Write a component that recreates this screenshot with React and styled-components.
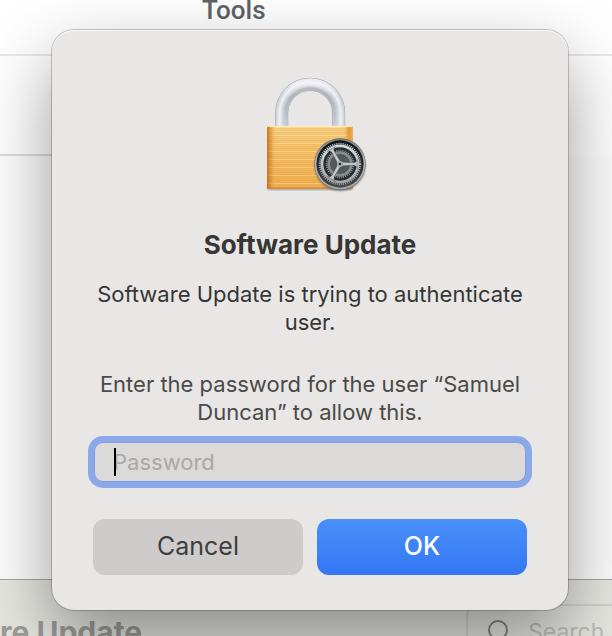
import React, { useState } from 'react'
import styled, { createGlobalStyle } from 'styled-components'

const GlobalStyle = createGlobalStyle`
    * {
        box-sizing: border-box;
    }

    body {
        margin: 0;
        background: #fff;
        font-family: Inter, "Liberation Sans", sans-serif;
    }
`

const Screen = styled.div`
    position: relative;
    display: flex;
    flex-direction: column;
    height: 100vh;
    overflow: hidden;
`

const PageHeader = styled.header`
    flex: none;
    height: 56px;
    padding-left: 202px;
    border-bottom: 2px solid #e8e8ea;
    color: #5f6368;
    font-family: Roboto, sans-serif;
    font-size: 26px;
    font-weight: 500;
    line-height: 20px;
`

const PageRow = styled.div`
    flex: none;
    width: 50%;
    height: 100px;
    border-bottom: 2px solid #dcdce3;
`

const PageBody = styled.main`
    flex: 1;
    background: #fdfdfd;
`

const BackWindow = styled.footer`
    flex: none;
    display: flex;
    justify-content: space-between;
    height: 57px;
    border-top: 1px solid #a4a4a4;
    background: #e6e7e1;
`

const BackTitle = styled.h2`
    margin: 0;
    padding-top: 34px;
    color: #9c9d9a;
    font-size: 30px;
    font-weight: 700;
    line-height: 36px;
`

const SearchBox = styled.label`
    display: flex;
    align-items: center;
    gap: 14px;
    width: 180px;
    height: 56px;
    margin: 24px -34px 0 0;
    padding-left: 18px;
    border: 2px solid #d3d4ce;
    border-radius: 12px;

    svg {
        flex: none;
    }

    input {
        width: 100px;
        padding: 0;
        border: 0;
        background: none;
        font-family: inherit;
        font-size: 23px;
    }

    input::placeholder {
        color: #bdbeb9;
        opacity: 1;
    }
`

const Overlay = styled.div`
    position: absolute;
    inset: 0;
    display: flex;
    justify-content: center;
    align-items: flex-start;
    padding: 30px 44px 26px 52px;
`

const Dialog = styled.form`
    display: flex;
    flex-direction: column;
    align-items: center;
    width: 100%;
    max-width: 516px;
    padding: 46px 41px 35px;
    border-radius: 22px;
    background: #e8e7e5;
    color: #363634;
    text-align: center;
    box-shadow:
        inset 0 1px 0 #f7f7f6,
        0 0 0 1px rgba(0, 0, 0, 0.2),
        0 30px 72px rgba(0, 0, 0, 0.4);
`

const Title = styled.h1`
    margin: 34px 0 20px;
    font-size: 26px;
    font-weight: 700;
    line-height: 30px;
`

const Message = styled.p`
    margin: 0 0 ${props => props.$gap}px;
    color: ${props => props.$color};
    font-size: 22px;
    line-height: 28px;
`

const Field = styled.label`
    position: relative;
    display: block;
    width: 100%;
    padding: 0 1px;
`

const PasswordInput = styled.input`
    display: block;
    width: 100%;
    height: 40px;
    padding: 0 18px;
    border: 1px solid #7f9de0;
    border-radius: 9px;
    outline: none;
    background: #dbdad8;
    box-shadow: 0 0 0 6px #8da8e9;
    caret-color: transparent;
    color: #363634;
    font-family: inherit;
    font-size: 22px;

    &::placeholder {
        color: #a9a9a7;
        opacity: 1;
    }
`

const Caret = styled.span`
    position: absolute;
    top: 6px;
    left: 21px;
    width: 2px;
    height: 28px;
    background: #000;
`

const Buttons = styled.div`
    display: grid;
    grid-template-columns: 1fr 1fr;
    gap: 14px;
    width: 100%;
    margin-top: 37px;
`

const Button = styled.button`
    height: 56px;
    padding: 0 0 2px;
    border: 0;
    border-radius: 12px;
    background: ${props => props.$primary ? 'linear-gradient(#4a90f8, #3377f6)' : '#cdccca'};
    color: ${props => props.$primary ? '#fff' : '#3e3e3c'};
    font-family: inherit;
    font-size: 25px;
    font-weight: ${props => props.$primary ? 500 : 400};
`

const LockIcon = () => (
    <svg width='120' height='120' viewBox='-18 24 360 360' aria-hidden='true'>
        <defs>
            <linearGradient id='steel' x1='0' y1='0' x2='0' y2='1'>
                <stop offset='0' stopColor='#e8eaed' />
                <stop offset='.3' stopColor='#c9cdd3' />
                <stop offset='1' stopColor='#d2d7de' />
            </linearGradient>
            <linearGradient id='inner' gradientUnits='userSpaceOnUse' x1='0' y1='60' x2='0' y2='174'>
                <stop offset='0' stopColor='#7f848d' />
                <stop offset='1' stopColor='#b4b9c1' />
            </linearGradient>
            <linearGradient id='brass' x1='0' y1='0' x2='0' y2='1'>
                <stop offset='0' stopColor='#f8d28a' />
                <stop offset='.35' stopColor='#f5c26a' />
                <stop offset='1' stopColor='#eead4e' />
            </linearGradient>
            <linearGradient id='sides'>
                <stop offset='0' stopColor='#b96813' stopOpacity='.85' />
                <stop offset='.04' stopColor='#d07f22' stopOpacity='.6' />
                <stop offset='.11' stopColor='#f5c26a' stopOpacity='0' />
                <stop offset='.88' stopColor='#f5c26a' stopOpacity='0' />
                <stop offset='.95' stopColor='#db8625' stopOpacity='.75' />
                <stop offset='1' stopColor='#f2b75d' />
            </linearGradient>
            <pattern id='brushed' width='258' height='24' patternUnits='userSpaceOnUse'>
                <path d='M0 2h258M0 14h258' stroke='#d98d2d' strokeWidth='2' opacity='.4' />
                <path d='M0 8h258M0 19h258' stroke='#dd912e' strokeWidth='2' opacity='.22' />
                <path d='M0 11h258' stroke='#ffe6ac' strokeWidth='3' opacity='.45' />
            </pattern>
            <linearGradient id='rim' x1='0' y1='0' x2='0' y2='1'>
                <stop offset='0' stopColor='#7b8085' />
                <stop offset='.5' stopColor='#b5babd' />
                <stop offset='1' stopColor='#a3a6a8' />
            </linearGradient>
            <linearGradient id='well' x1='0' y1='0' x2='0' y2='1'>
                <stop offset='0' stopColor='#0f1314' />
                <stop offset='1' stopColor='#484848' />
            </linearGradient>
            <linearGradient id='wheel' gradientUnits='userSpaceOnUse' x1='0' y1='-60' x2='0' y2='60'>
                <stop offset='0' stopColor='#d4dde0' />
                <stop offset='1' stopColor='#a0a4a6' />
            </linearGradient>
            <filter id='soft' x='-20%' y='-20%' width='140%' height='140%'>
                <feGaussianBlur stdDeviation='3' />
            </filter>
        </defs>

        <path d='M77 175V134A85 85 0 0 1 248 134V175' fill='none' stroke='#a0a4ab' strokeWidth='39' />
        <path d='M77 175V134A85 85 0 0 1 248 134V175' fill='none' stroke='url(#steel)' strokeWidth='36' />
        <path d='M90 174V134A72 72 0 0 1 235 134V174' fill='none' stroke='url(#inner)' strokeWidth='8' opacity='.6' filter='url(#soft)' />
        <path d='M71 174V134A91 91 0 0 1 254 134V174' fill='none' stroke='#f3f5f8' strokeWidth='9' filter='url(#soft)' />

        <rect x='35' y='353' width='254' height='13' fill='#555' opacity='.5' filter='url(#soft)' />
        <rect x='33' y='174' width='258' height='188' rx='2' fill='url(#brass)' />
        <rect x='33' y='174' width='258' height='188' rx='2' fill='url(#brushed)' />
        <rect x='33' y='174' width='258' height='188' rx='2' fill='url(#sides)' />
        <path d='M34 175H290' stroke='#fff0c9' strokeWidth='3' />
        <path d='M34 360H290' stroke='#c5802d' strokeWidth='3' />

        <g transform='translate(252 288)'>
            <circle cy='4' r='76' fill='#333' opacity='.6' filter='url(#soft)' />
            <circle r='77' fill='#5a5f62' />
            <circle r='76' fill='url(#rim)' />
            <circle r='71' fill='url(#well)' />
            <circle r='60' fill='none' stroke='url(#wheel)' strokeWidth='7' strokeDasharray='3 3.28' />
            <circle r='43' fill='none' stroke='#272b2c' strokeWidth='20' />
            <circle r='40' fill='none' stroke='#8d9293' strokeWidth='6' strokeDasharray='3 3.28' />
            <circle r='34' fill='#4d5152' stroke='#878b8c' strokeWidth='8' />
            <circle r='28' fill='#555858' />
            <circle r='54' fill='none' stroke='url(#wheel)' strokeWidth='8' />
            {[0, 120, 240].map(angle => (
                <path
                    key={angle}
                    transform={`rotate(${angle})`}
                    d='M4 -5L42 -4Q50 -5 52 -14V14Q50 5 42 4L4 5Z'
                    fill='#c3cbce'
                    stroke='#303435'
                    strokeWidth='1'
                />
            ))}
            <circle r='9' fill='#a8b0b3' />
            <circle r='4' fill='#25292b' />
        </g>
    </svg>
)

const App = () => {
    const [password, setPassword] = useState('')

    return (
        <>
            <GlobalStyle />
            <Screen>
                <PageHeader>Tools</PageHeader>
                <PageRow />
                <PageBody />
                <BackWindow>
                    <BackTitle>re Update</BackTitle>
                    <SearchBox>
                        <svg width='28' height='28' viewBox='0 0 28 28' fill='none' stroke='#858582' strokeWidth='2' aria-hidden='true'>
                            <circle cx='12' cy='12' r='9' />
                            <path d='M19 19l7 7' />
                        </svg>
                        <input type='search' placeholder='Search' aria-label='Search' />
                    </SearchBox>
                </BackWindow>

                <Overlay>
                    <Dialog role='dialog' aria-labelledby='dialog-title' onSubmit={e => e.preventDefault()}>
                        <LockIcon />
                        <Title id='dialog-title'>Software Update</Title>
                        <Message $gap={34} $color='#363634'>Software Update is trying to authenticate user.</Message>
                        <Message $gap={16} $color='#4a4a48'>Enter the password for the user “Samuel Duncan” to allow this.</Message>
                        <Field>
                            <PasswordInput
                                type='password'
                                placeholder='Password'
                                aria-label='Password'
                                value={password}
                                onChange={e => setPassword(e.target.value)}
                            />
                            {!password && <Caret />}
                        </Field>
                        <Buttons>
                            <Button type='button'>Cancel</Button>
                            <Button type='submit' $primary>OK</Button>
                        </Buttons>
                    </Dialog>
                </Overlay>
            </Screen>
        </>
    )
}

export default App
